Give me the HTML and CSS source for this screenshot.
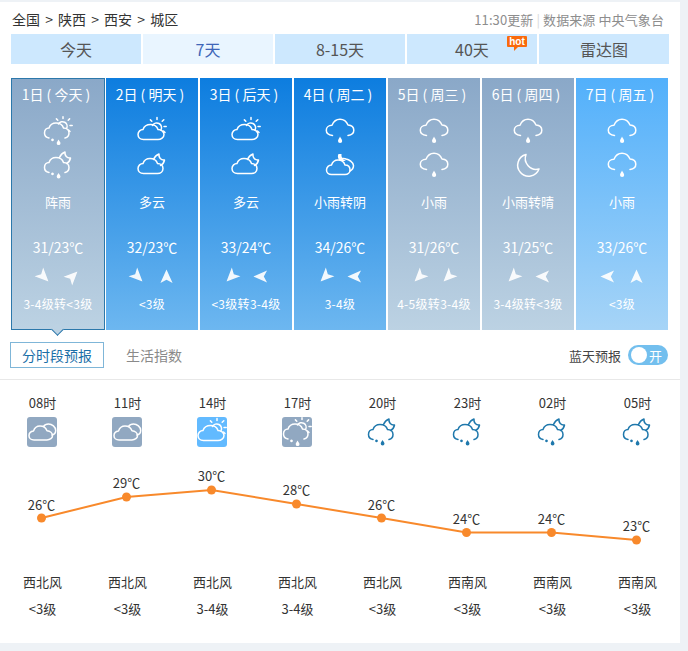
FILE: index.html
```html
<!DOCTYPE html>
<html lang="zh-CN">
  <head>
    <meta charset="UTF-8" />
    <title>城区天气预报</title>
    <link rel="stylesheet" href="styles.css">
  </head>
  <body>
    <!-- icon set -->
    <svg class="icon-defs" xmlns="http://www.w3.org/2000/svg">
      <symbol id="i-sun-cloud" viewBox="0 0 30 30">
        <path d="M6.5 23.5C3 23.5 1 21 1 18.5C1 15.5 3.5 13.5 6 13.5C7 10.5 10 8.5 13.5 8.5C17 8.5 20 10.5 21 13.5C24 13.5 27 15.5 27 18.5C27 21.5 24 23.5 21 23.5Z" />
        <path d="M15.5 9.5A4.5 4.5 0 1 1 24 14M20 3.5V1.5M25.2 5.3L26.8 3.7M27 10.5H29.2M26.5 15L28 16.5M14.8 5.3L13.4 3.9" />
      </symbol>
      <symbol id="i-moon-cloud" viewBox="0 0 30 30">
        <path d="M6.5 23.5C3 23.5 1 21 1 18.5C1 15.5 3.5 13.5 6 13.5C7 10.5 10 8.5 13 8.5C16.5 8.5 19.5 10.5 20.5 13.5C23.5 13.5 26 15.5 26 18.5C26 21.5 23.5 23.5 20.5 23.5Z" />
        <path d="M16.5 9.5C17.5 7 19.5 5 22 4C21.5 7.5 24 10.5 27.5 10C27 12.5 25.5 14.5 23.5 15.5" />
      </symbol>
      <symbol id="i-rain" viewBox="0 0 30 30">
        <path d="M7.5 19.5C3.5 19 1.3 17 1.3 14.2C1.3 11.5 3.5 9.3 7 9.3C8.5 5.5 11.5 3.3 15 3.3C18.5 3.3 21.5 5.5 23 9C26.5 9.3 28.8 11.5 28.8 14.2C28.8 17 26.5 19 23 19.5" />
        <path class="drop" d="M15 20.5C14.4 22.3 13 23.5 13 25A2.1 2.1 0 0 0 17.2 25C17.2 23.5 15.7 22.3 15 20.5Z" />
      </symbol>
      <symbol id="i-shower-sun" viewBox="0 0 30 30">
        <path d="M6 22C3 21.5 1.5 19.5 1.5 17C1.5 14 3.5 12 6 12C7 9 10 7 13 7C16.5 7 19.5 9 20.5 12C23.5 12 26 14 26 17C26 19.5 24.5 21.5 22 22" />
        <path d="M15.5 8A4.5 4.5 0 1 1 23.5 12.5M20 2.5V.8M25.2 4.3L26.6 2.9M27 9.5H29.2M25.5 14L27 15.5M14.8 4.3L13.4 2.9" />
        <path class="drop" d="M9.5 22.5A1.4 1.4 0 1 0 9.51 22.5ZM15.5 23.5C14.9 25 13.7 25.8 13.7 27.2A1.9 1.9 0 0 0 17.5 27.2C17.5 25.8 16.2 25 15.5 23.5Z" />
      </symbol>
      <symbol id="i-shower-moon" viewBox="0 0 30 30">
        <path d="M6 22.5C3 22 1.5 20 1.5 17.5C1.5 14.5 3.5 12.5 6 12.5C7 9.5 10 7.5 13 7.5C16.5 7.5 19.5 9.5 20.5 12.5C23.5 12.5 26 14.5 26 17.5C26 20 24.5 22 22 22.5" />
        <path d="M16.5 7.5C17.5 5 19.5 3 22 2C21.5 5.5 24 8.5 27.5 8C27 10.5 25.5 12.5 23.5 13.5" />
        <path class="drop" d="M9.5 22.5A1.4 1.4 0 1 0 9.51 22.5ZM15.5 23C14.9 24.5 13.7 25.3 13.7 26.5A1.9 1.9 0 0 0 17.5 26.5C17.5 25.3 16.2 24.5 15.5 23Z" />
      </symbol>
      <symbol id="i-overcast" viewBox="0 0 30 30">
        <path d="M7 23C4 23 2 21 2 18.7C2 16 4 14.3 6.5 14C7.5 11 10 9 13 9C16.5 9 19 11 20 13.8C23 14 25.5 16 25.5 18.7C25.5 21 23 23 20 23Z" />
        <path d="M16.5 9.5C17.5 8 19.5 7 21.5 7C25 7 28.7 10 28.7 13.5C28.7 16 27 17.5 25 18" />
      </symbol>
      <symbol id="i-overcast-moon" viewBox="0 0 30 30">
        <path d="M6.5 24.5C3.5 24.5 1.5 22.5 1.5 20C1.5 17 4 15 6.5 15C7.5 12 10 10 13 10C16.5 10 19 12 20 15C23 15 25 17 25 20C25 22.5 23 24.5 20 24.5Z" />
        <path d="M15 10C16 8.5 19 8 21 9C24 9.5 28 12 28.5 15.5C28.5 18 27 20 25 21" />
        <path class="drop" d="M13.5 4C12 7 13.5 10 16 11L21 11C19 10 16 8 16.5 4Z" />
      </symbol>
      <symbol id="i-moon" viewBox="0 0 30 30">
        <path d="M13 4.5A11 11 0 1 0 26 19A11 11 0 0 1 13 4.5Z" />
      </symbol>
      <symbol id="i-wind" viewBox="0 0 16 16">
        <path d="M8 .5L14.5 15L8 11.5L1.5 15Z" />
      </symbol>
    </svg>

    <div class="panel">
      <div class="crumb-bar">
        <div class="crumbs">全国 &gt; 陕西 &gt; 西安 &gt; 城区</div>
        <div class="source">11:30更新 <span class="sep">|</span> 数据来源 中央气象台</div>
      </div>

      <div class="tabs">
        <a class="tab">今天</a>
        <a class="tab active">7天</a>
        <a class="tab">8-15天</a>
        <a class="tab">40天<span class="hot">hot</span></a>
        <a class="tab">雷达图</a>
      </div>

      <ul class="days">
        <li class="day grey selected">
          <h4>1日 ( 今天 )</h4>
          <svg class="wx"><use href="#i-shower-sun" /></svg>
          <svg class="wx"><use href="#i-shower-moon" /></svg>
          <p class="desc">阵雨</p>
          <p class="temp">31/23℃</p>
          <div class="winds"><svg class="arrow se"><use href="#i-wind" /></svg><svg class="arrow ne"><use href="#i-wind" /></svg></div>
          <p class="level">3-4级转&lt;3级</p>
        </li>
        <li class="day blue">
          <h4>2日 ( 明天 )</h4>
          <svg class="wx"><use href="#i-sun-cloud" /></svg>
          <svg class="wx"><use href="#i-moon-cloud" /></svg>
          <p class="desc">多云</p>
          <p class="temp">32/23℃</p>
          <div class="winds"><svg class="arrow se"><use href="#i-wind" /></svg><svg class="arrow n"><use href="#i-wind" /></svg></div>
          <p class="level">&lt;3级</p>
        </li>
        <li class="day blue">
          <h4>3日 ( 后天 )</h4>
          <svg class="wx"><use href="#i-sun-cloud" /></svg>
          <svg class="wx"><use href="#i-moon-cloud" /></svg>
          <p class="desc">多云</p>
          <p class="temp">33/24℃</p>
          <div class="winds"><svg class="arrow sw"><use href="#i-wind" /></svg><svg class="arrow w"><use href="#i-wind" /></svg></div>
          <p class="level">&lt;3级转3-4级</p>
        </li>
        <li class="day blue">
          <h4>4日 ( 周二 )</h4>
          <svg class="wx"><use href="#i-rain" /></svg>
          <svg class="wx"><use href="#i-overcast-moon" /></svg>
          <p class="desc">小雨转阴</p>
          <p class="temp">34/26℃</p>
          <div class="winds"><svg class="arrow sw"><use href="#i-wind" /></svg><svg class="arrow w"><use href="#i-wind" /></svg></div>
          <p class="level">3-4级</p>
        </li>
        <li class="day grey">
          <h4>5日 ( 周三 )</h4>
          <svg class="wx"><use href="#i-rain" /></svg>
          <svg class="wx"><use href="#i-rain" /></svg>
          <p class="desc">小雨</p>
          <p class="temp">31/26℃</p>
          <div class="winds"><svg class="arrow sw"><use href="#i-wind" /></svg><svg class="arrow sw"><use href="#i-wind" /></svg></div>
          <p class="level">4-5级转3-4级</p>
        </li>
        <li class="day grey">
          <h4>6日 ( 周四 )</h4>
          <svg class="wx"><use href="#i-rain" /></svg>
          <svg class="wx"><use href="#i-moon" /></svg>
          <p class="desc">小雨转晴</p>
          <p class="temp">31/25℃</p>
          <div class="winds"><svg class="arrow sw"><use href="#i-wind" /></svg><svg class="arrow w"><use href="#i-wind" /></svg></div>
          <p class="level">3-4级转&lt;3级</p>
        </li>
        <li class="day sky">
          <h4>7日 ( 周五 )</h4>
          <svg class="wx"><use href="#i-rain" /></svg>
          <svg class="wx"><use href="#i-rain" /></svg>
          <p class="desc">小雨</p>
          <p class="temp">33/26℃</p>
          <div class="winds"><svg class="arrow w"><use href="#i-wind" /></svg><svg class="arrow n"><use href="#i-wind" /></svg></div>
          <p class="level">&lt;3级</p>
        </li>
      </ul>

      <div class="sub-bar">
        <div class="sub-tabs">
          <a class="sub-tab active">分时段预报</a>
          <a class="sub-tab">生活指数</a>
        </div>
        <div class="blue-sky">
          蓝天预报
          <span class="switch"><i class="knob"></i>开</span>
        </div>
      </div>

      <div class="hours">
        <div class="hour-row">
          <div class="hour"><p>08时</p><span class="hour-icon grey"><svg><use href="#i-overcast" /></svg></span></div>
          <div class="hour"><p>11时</p><span class="hour-icon grey"><svg><use href="#i-overcast" /></svg></span></div>
          <div class="hour"><p>14时</p><span class="hour-icon sky"><svg><use href="#i-sun-cloud" /></svg></span></div>
          <div class="hour"><p>17时</p><span class="hour-icon grey"><svg><use href="#i-shower-sun" /></svg></span></div>
          <div class="hour"><p>20时</p><span class="hour-icon night"><svg><use href="#i-shower-moon" /></svg></span></div>
          <div class="hour"><p>23时</p><span class="hour-icon night"><svg><use href="#i-shower-moon" /></svg></span></div>
          <div class="hour"><p>02时</p><span class="hour-icon night"><svg><use href="#i-shower-moon" /></svg></span></div>
          <div class="hour"><p>05时</p><span class="hour-icon night"><svg><use href="#i-shower-moon" /></svg></span></div>
        </div>

        <!-- temperature curve -->
        <svg class="chart" width="680" height="120" viewBox="0 0 680 120">
          <polyline class="line" points="41.5,71 126.5,50 211.5,43 296.5,57 381.5,71 466.5,85.5 551.5,85.5 636.5,93" />
          <g class="dots">
            <circle cx="41.5" cy="71" r="4.5" />
            <circle cx="126.5" cy="50" r="4.5" />
            <circle cx="211.5" cy="43" r="4.5" />
            <circle cx="296.5" cy="57" r="4.5" />
            <circle cx="381.5" cy="71" r="4.5" />
            <circle cx="466.5" cy="85.5" r="4.5" />
            <circle cx="551.5" cy="85.5" r="4.5" />
            <circle cx="636.5" cy="93" r="4.5" />
          </g>
          <g class="temps">
            <text x="41.5" y="63">26℃</text>
            <text x="126.5" y="41">29℃</text>
            <text x="211.5" y="34">30℃</text>
            <text x="296.5" y="48">28℃</text>
            <text x="381.5" y="63">26℃</text>
            <text x="466.5" y="77">24℃</text>
            <text x="551.5" y="77">24℃</text>
            <text x="636.5" y="84">23℃</text>
          </g>
        </svg>

        <div class="hour-row wind-row">
          <p>西北风</p><p>西北风</p><p>西北风</p><p>西北风</p><p>西北风</p><p>西南风</p><p>西南风</p><p>西南风</p>
        </div>
        <div class="hour-row level-row">
          <p>&lt;3级</p><p>&lt;3级</p><p>3-4级</p><p>3-4级</p><p>&lt;3级</p><p>&lt;3级</p><p>&lt;3级</p><p>&lt;3级</p>
        </div>
      </div>
    </div>
  </body>
</html>
```

FILE: styles.css
```css
/* General */
body {
  margin: 0;
  background: #eef2f6;
  font-family: "Noto Sans CJK SC", "Liberation Sans", sans-serif;
  color: #333;
}

p,
h4,
ul {
  margin: 0;
  padding: 0;
  font-weight: 400;
}

.icon-defs {
  display: none;
}

.panel {
  width: 680px;
  height: 641px;
  margin-top: 2px;
  background: #fff;
  box-sizing: border-box;
}

/* Breadcrumb */
.crumb-bar {
  display: flex;
  justify-content: space-between;
  align-items: center;
  height: 30px;
  margin-bottom: 2px;
  padding: 4px 16px 0 12px;
  box-sizing: border-box;
}

.crumbs {
  font-size: 14px;
  word-spacing: 2px;
  color: #333;
}

.source {
  font-size: 13px;
  letter-spacing: 0.1px;
  color: #8d8d8d;
}

.sep {
  color: #d8d8d8;
}

/* Tabs */
.tabs {
  display: flex;
  gap: 2px;
  padding-left: 11px;
}

.tab {
  position: relative;
  width: 130px;
  height: 30px;
  line-height: 30px;
  text-align: center;
  font-size: 16px;
  color: #555;
  background: #cde8fe;
}

.tab.active {
  background: #e9f5ff;
  color: #3f66b8;
}

.hot {
  position: absolute;
  top: 2px;
  right: 10px;
  width: 20px;
  height: 11px;
  line-height: 11px;
  border-radius: 1px;
  background: #f96a0c;
  color: #fff;
  font-family: "Liberation Sans", sans-serif;
  font-size: 10px;
  font-weight: 700;
}

.hot::after {
  content: "";
  position: absolute;
  left: 7px;
  top: 11px;
  border-top: 4px solid #f96a0c;
  border-right: 4px solid transparent;
}

/* Seven day cards */
.days {
  display: flex;
  gap: 2px;
  list-style: none;
  margin: 14px 0 0 11px;
}

.day {
  position: relative;
  display: flex;
  flex-direction: column;
  align-items: center;
  width: 92px;
  height: 252px;
  box-sizing: border-box;
  color: #fff;
}

.day.blue {
  background: linear-gradient(#0d7ddf, #6db7f0);
}

.day.grey {
  background: linear-gradient(#8aa8c8, #bcd2e3);
}

.day.sky {
  background: linear-gradient(#52b0fb, #a6d4f7);
}

.day.selected {
  width: 94px;
  margin-right: -1px;
  border: 1px solid #2c78ab;
}

.day.selected::after {
  content: "";
  position: absolute;
  left: 41px;
  bottom: -5px;
  width: 8px;
  height: 8px;
  background: #bcd2e3;
  border-right: 1px solid #2c78ab;
  border-bottom: 1px solid #2c78ab;
  transform: rotate(45deg);
}

.day h4 {
  height: 34px;
  padding-right: 4px;
  line-height: 33px;
  font-size: 14px;
  white-space: pre;
}

.day.selected h4 {
  margin-top: -1px;
}

.wx {
  width: 30px;
  height: 30px;
  margin-top: 4px;
  fill: none;
  stroke: #fff;
  stroke-width: 1.5;
  stroke-linecap: round;
  stroke-linejoin: round;
}

.drop {
  fill: currentColor;
  stroke: none;
}

.desc {
  margin-top: 10px;
  height: 24px;
  line-height: 24px;
  font-size: 13px;
}

.temp {
  margin-top: 21px;
  height: 24px;
  line-height: 24px;
  font-size: 14px;
}

.winds {
  display: flex;
  gap: 14px;
  margin-top: 10px;
  height: 16px;
}

.arrow {
  width: 15px;
  height: 15px;
  fill: #fff;
  opacity: 0.92;
}

.arrow.n { transform: rotate(0deg); }
.arrow.ne { transform: rotate(45deg); }
.arrow.se { transform: rotate(135deg); }
.arrow.sw { transform: rotate(225deg); }
.arrow.w { transform: rotate(270deg); }

.level {
  margin-top: 9px;
  height: 20px;
  line-height: 20px;
  font-size: 12px;
  letter-spacing: 0.3px;
  white-space: nowrap;
}

/* Sub tabs */
.sub-bar {
  display: flex;
  justify-content: space-between;
  align-items: center;
  margin-top: 12px;
  padding: 0 12px 11px 10px;
  border-bottom: 1px solid #e8e8e8;
}

.sub-tabs {
  display: flex;
  align-items: center;
  gap: 22px;
}

.sub-tab {
  font-size: 14px;
  line-height: 24px;
  color: #8a8a8a;
}

.sub-tab.active {
  width: 92px;
  text-align: center;
  border: 1px solid #7fb6d8;
  color: #1a6fa8;
}

.blue-sky {
  display: flex;
  align-items: center;
  gap: 7px;
  font-size: 13px;
  color: #444;
}

.switch {
  display: flex;
  align-items: center;
  gap: 2px;
  width: 40px;
  height: 20px;
  box-sizing: border-box;
  padding-left: 3px;
  border-radius: 10px;
  background: #73bfee;
  color: #fff;
  font-size: 13px;
}

.knob {
  width: 16px;
  height: 16px;
  border-radius: 50%;
  background: #fff;
}

/* Hourly forecast */
.hours {
  padding-top: 13px;
}

.hour-row {
  display: grid;
  grid-template-columns: repeat(8, 85px);
  text-align: center;
  font-size: 13px;
  color: #333;
}

.hour p {
  height: 20px;
  line-height: 20px;
}

.hour-icon {
  display: block;
  width: 30px;
  height: 30px;
  margin: 4px 0 0 27px;
  border-radius: 3px;
  color: #fff;
}

.hour-icon.grey {
  background: #91a8c1;
}

.hour-icon.sky {
  background: #62baff;
}

.hour-icon.night {
  background: none;
  color: #1f78ac;
}

.hour-icon svg {
  display: block;
  width: 30px;
  height: 30px;
  fill: none;
  stroke: currentColor;
  stroke-width: 1.5;
  stroke-linecap: round;
  stroke-linejoin: round;
}

.chart {
  display: block;
}

.line {
  fill: none;
  stroke: #f8892b;
  stroke-width: 2;
}

.dots {
  fill: #f8892b;
}

.temps {
  font-size: 13px;
  fill: #333;
  text-anchor: middle;
}

.wind-row p {
  height: 30px;
  line-height: 30px;
}

.level-row p {
  height: 24px;
  line-height: 24px;
}
```
